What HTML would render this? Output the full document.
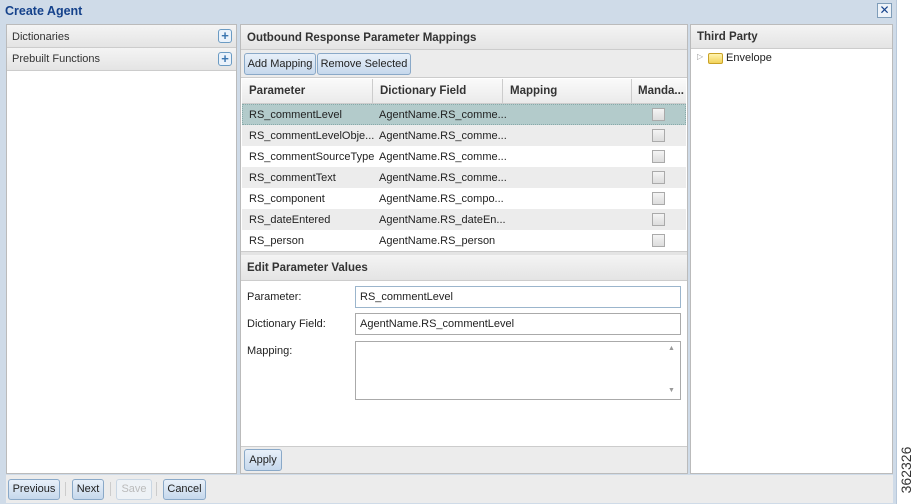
<!DOCTYPE html>
<html><head><meta charset="utf-8"><style>
*{box-sizing:border-box;margin:0;padding:0}
body{width:916px;height:504px;background:#fff;font-family:"Liberation Sans",sans-serif;font-size:11px;color:#222;position:relative;overflow:hidden}
.a{position:absolute}
.dlg{left:0;top:0;width:897px;height:504px;background:#cfdbe8;border-right:1px solid #b8c8da}
.title{left:5px;top:4px;font-weight:bold;font-size:12.5px;color:#15428b}
.close{left:877px;top:3px;width:15px;height:15px;border:1px solid #7f9db9;background:#eef3f9;color:#15428b;font-size:12px;line-height:12px;text-align:center}
.panel{background:#fff;border:1px solid #bbb}
.hdr{background:linear-gradient(#f4f4f4,#e4e4e4);border-bottom:1px solid #ccc;font-weight:bold;color:#333;font-size:11.5px}
.plus{width:14px;height:14px;border:1px solid #6b9bc3;border-radius:3px;background:#eaf2fb;color:#3a75b0;font-size:13px;line-height:11px;text-align:center;font-weight:bold}
.btn{height:22px;border:1px solid #8aa9c8;border-radius:3px;background:linear-gradient(#e8f0f9,#c6d8ec);font-size:11px;line-height:20px;padding:0;color:#222;text-align:center;white-space:nowrap;overflow:hidden}
.row{left:0;width:444px;height:21px;line-height:21px}
.row span{position:absolute;top:0}
.cb{position:absolute;left:410px;top:4px;width:13px;height:13px;border:1px solid #aaa;background:linear-gradient(#f4f4f4,#ddd)}
.inp{border:1px solid #aaa;background:#fff;height:22px;line-height:20px;padding-left:4px}
</style></head><body>
<div class="a dlg"></div>
<div class="a title">Create Agent</div>
<div class="a close">✕</div>

<div class="a panel" style="left:6px;top:24px;width:231px;height:450px"></div>
<div class="a hdr" style="left:7px;top:25px;width:229px;height:23px;font-weight:normal;font-size:11px;padding:6px 0 0 5px">Dictionaries</div>
<div class="a plus" style="left:218px;top:29px">+</div>
<div class="a hdr" style="left:7px;top:48px;width:229px;height:23px;font-weight:normal;font-size:11px;padding:5px 0 0 5px">Prebuilt Functions</div>
<div class="a plus" style="left:218px;top:52px">+</div>

<div class="a panel" style="left:240px;top:24px;width:448px;height:450px;background:#fff"></div>
<div class="a hdr" style="left:241px;top:25px;width:446px;height:25px;padding:7px 0 0 6px">Outbound Response Parameter Mappings</div>
<div class="a" style="left:241px;top:50px;width:446px;height:28px;background:#ececec;border-bottom:1px solid #ccc"></div>
<div class="a btn" style="left:244px;top:53px;width:72px">Add Mapping</div>
<div class="a btn" style="left:317px;top:53px;width:94px">Remove Selected</div>
<div class="a" style="left:242px;top:79px;width:444px;height:25px;background:linear-gradient(#fafafa,#eaeaea);border-bottom:1px solid #ccc;font-weight:bold;color:#333;line-height:25px;font-size:11.5px">
<span class="a" style="left:7px">Parameter</span>
<span class="a" style="left:130px;top:0;height:25px;border-left:1px solid #ccc;padding-left:7px">Dictionary Field</span>
<span class="a" style="left:260px;top:0;height:25px;border-left:1px solid #ccc;padding-left:7px">Mapping</span>
<span class="a" style="left:389px;top:0;height:25px;border-left:1px solid #ccc;padding-left:6px">Manda...</span>
</div>
<div class="a" style="left:242px;top:104px;width:444px;height:147px">
<div class="a row" style="top:0;background:#b3cbcb;border:1px dotted #8aa"><span style="left:6px;top:0px">RS_commentLevel</span><span style="left:136px;top:0px">AgentName.RS_comme...</span><i class="cb" style="top:3px;left:409px"></i></div>
<div class="a row" style="top:21px;background:#ececec"><span style="left:7px;top:1px">RS_commentLevelObje...</span><span style="left:137px;top:1px">AgentName.RS_comme...</span><i class="cb"></i></div>
<div class="a row" style="top:42px"><span style="left:7px;top:1px">RS_commentSourceType</span><span style="left:137px;top:1px">AgentName.RS_comme...</span><i class="cb"></i></div>
<div class="a row" style="top:63px;background:#ececec"><span style="left:7px;top:1px">RS_commentText</span><span style="left:137px;top:1px">AgentName.RS_comme...</span><i class="cb"></i></div>
<div class="a row" style="top:84px"><span style="left:7px;top:1px">RS_component</span><span style="left:137px;top:1px">AgentName.RS_compo...</span><i class="cb"></i></div>
<div class="a row" style="top:105px;background:#ececec"><span style="left:7px;top:1px">RS_dateEntered</span><span style="left:137px;top:1px">AgentName.RS_dateEn...</span><i class="cb"></i></div>
<div class="a row" style="top:126px"><span style="left:7px;top:1px">RS_person</span><span style="left:137px;top:1px">AgentName.RS_person</span><i class="cb"></i></div>
</div>
<div class="a" style="left:241px;top:251px;width:446px;height:4px;background:#e4e4e4;border-top:1px solid #ccc"></div>
<div class="a hdr" style="left:241px;top:255px;width:446px;height:26px;padding:7px 0 0 6px">Edit Parameter Values</div>
<div class="a" style="left:247px;top:291px">Parameter:</div>
<div class="a inp" style="left:355px;top:286px;width:326px;border-color:#9bb5cc">RS_commentLevel</div>
<div class="a" style="left:247px;top:318px">Dictionary Field:</div>
<div class="a inp" style="left:355px;top:313px;width:326px">AgentName.RS_commentLevel</div>
<div class="a" style="left:247px;top:345px">Mapping:</div>
<div class="a inp" style="left:355px;top:341px;width:326px;height:59px"></div>
<div class="a" style="left:668px;top:345px;font-size:7px;color:#999">▲</div>
<div class="a" style="left:668px;top:387px;font-size:7px;color:#999">▼</div>
<div class="a" style="left:241px;top:446px;width:446px;height:27px;background:#ececec;border-top:1px solid #ccc"></div>
<div class="a btn" style="left:244px;top:449px;width:38px">Apply</div>

<div class="a panel" style="left:690px;top:24px;width:203px;height:450px"></div>
<div class="a hdr" style="left:691px;top:25px;width:201px;height:24px;padding:6px 0 0 6px">Third Party</div>
<div class="a" style="left:697px;top:52px;font-size:8px;color:#999">▷</div>
<div class="a" style="left:708px;top:53px;width:15px;height:11px;border:1px solid #c9a227;background:linear-gradient(#fff4b0,#f2d25a);border-radius:2px"></div>
<div class="a" style="left:726px;top:52px">Envelope</div>

<div class="a" style="left:6px;top:475px;width:887px;height:28px;background:#ececec"></div>
<div class="a btn" style="left:8px;top:479px;height:21px;line-height:19px;width:52px">Previous</div>
<div class="a" style="left:65px;top:482px;width:1px;height:14px;background:#ccc"></div>
<div class="a btn" style="left:72px;top:479px;height:21px;line-height:19px;width:32px">Next</div>
<div class="a" style="left:110px;top:482px;width:1px;height:14px;background:#ccc"></div>
<div class="a btn" style="left:116px;top:479px;height:21px;line-height:19px;width:36px;color:#bbb;border-color:#c9d6e3;background:#eef2f6">Save</div>
<div class="a" style="left:156px;top:482px;width:1px;height:14px;background:#ccc"></div>
<div class="a btn" style="left:163px;top:479px;height:21px;line-height:19px;width:43px">Cancel</div>

<div class="a" style="left:897px;top:0;width:19px;height:504px;background:#fff"></div>
<div class="a" style="transform:rotate(-90deg);transform-origin:center;font-size:14px;color:#333;text-align:center;white-space:nowrap;width:60px;left:876px;top:462px">362326</div>
</body></html>
